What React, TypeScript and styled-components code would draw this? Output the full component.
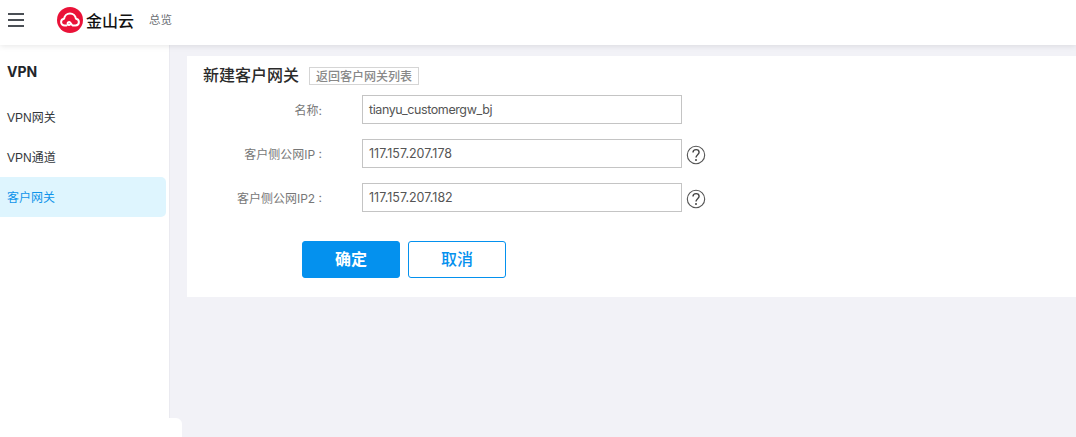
import styled, { createGlobalStyle } from "styled-components";

const GlobalStyle = createGlobalStyle`
  html, body {
    margin: 0;
    padding: 0;
    height: 100%;
    overflow: hidden;
    background: #f2f2f7;
    font-family: "Liberation Sans", "Noto Sans CJK SC", sans-serif;
  }
`;
const Page = styled.div`
  position: relative;
  height: 437px;
  overflow: hidden;
`;
const Header = styled.header`
  position: relative;
  z-index: 2;
  display: flex;
  align-items: center;
  box-sizing: border-box;
  height: 45px;
  padding-bottom: 5px;
  background: #fff;
  box-shadow: 0 1px 6px rgba(0, 0, 0, 0.1);
`;
const MenuButton = styled.div`
  display: flex;
  flex-direction: column;
  gap: 4px;
  width: 16px;
  margin: 0 33px 0 8px;
  span {
    display: block;
    height: 2px;
    background: #4a4f55;
  }
`;
const Logo = styled.div`
  display: flex;
  align-items: center;
  gap: 3px;
  margin-right: 16px;
`;
const LogoText = styled.span`
  font-family: "Noto Sans CJK SC", sans-serif;
  font-size: 16px;
  font-weight: 500;
  color: #111;
  line-height: 20px;
`;
const HeaderLink = styled.span`
  font-family: "Noto Sans CJK SC", sans-serif;
  font-size: 11.5px;
  color: #6b6f75;
  margin: 0 0 2px -1px;
`;
const Body = styled.div`
  display: flex;
  height: 392px;
`;
const Sidebar = styled.aside`
  width: 170px;
  flex: none;
  box-sizing: border-box;
  background: #fff;
  border-right: 1px solid #eaeaf0;
  padding-top: 18px;
`;
const SideTitle = styled.div`
  font-family: Inter, sans-serif;
  font-size: 14px;
  font-weight: 700;
  line-height: 18px;
  color: #22252a;
  padding-left: 7px;
  margin-bottom: 16px;
`;
const SideItem = styled.div<{ $active?: boolean }>`
  display: flex;
  align-items: center;
  height: 40px;
  width: 166px;
  box-sizing: border-box;
  padding: 0 0 2px 7px;
  font-size: 12px;
  color: ${(p) => (p.$active ? "#0f94ea" : "#33373c")};
  background: ${(p) => (p.$active ? "#def5fe" : "transparent")};
  border-radius: ${(p) => (p.$active ? "0 5px 5px 0" : "0")};
`;
const CornerFlap = styled.div`
  position: absolute;
  left: 0;
  bottom: 0;
  width: 182px;
  height: 19px;
  background: #fff;
  border-top-right-radius: 6px;
`;
const Main = styled.main`
  flex: 1;
  padding: 11px 0 0 17px;
`;
const Card = styled.section`
  height: 241px;
  box-sizing: border-box;
  background: #fff;
  padding: 8px 0 0 16px;
`;
const TitleRow = styled.div`
  display: flex;
  align-items: center;
  gap: 10px;
  height: 23px;
  margin-bottom: 8px;
`;
const Title = styled.h2`
  margin: 0 0 4px;
  font-family: "Noto Sans CJK SC", sans-serif;
  font-size: 16px;
  line-height: 20px;
  font-weight: 500;
  color: #2b2b2b;
`;
const BackLink = styled.a`
  box-sizing: border-box;
  display: flex;
  align-items: center;
  justify-content: center;
  width: 110px;
  height: 18px;
  border: 1px solid #d5d5d5;
  font-family: "Noto Sans CJK SC", sans-serif;
  font-size: 12px;
  font-weight: 500;
  color: #888;
`;
const Form = styled.div`
  display: flex;
  flex-direction: column;
  gap: 15px;
`;
const Row = styled.div`
  display: flex;
  align-items: center;
  height: 29px;
`;
const Label = styled.label`
  width: 119px;
  margin-right: 40px;
  text-align: right;
  font-family: Inter, "Noto Sans CJK SC", sans-serif;
  font-size: 12px;
  color: #777;
  white-space: nowrap;
`;
const Input = styled.div<{ $tight?: boolean }>`
  box-sizing: border-box;
  width: 320px;
  height: 29px;
  border: 1px solid #c4c4c4;
  padding-left: 6px;
  font-family: Inter, sans-serif;
  font-size: 12.5px;
  letter-spacing: ${(p) => (p.$tight ? "-0.4px" : "0")};
  line-height: 27px;
  color: #555;
`;
const Help = styled.svg`
  width: 20px;
  height: 20px;
  margin: 3px 0 0 4px;
`;
const Actions = styled.div`
  display: flex;
  gap: 8px;
  margin: 29px 0 0 99px;
`;
const Button = styled.button<{ $primary?: boolean }>`
  width: 98px;
  height: 37px;
  box-sizing: border-box;
  border-radius: 3px;
  border: 1px solid #0491ee;
  background: ${(p) => (p.$primary ? "#0491ee" : "#fff")};
  color: ${(p) => (p.$primary ? "#fff" : "#0491ee")};
  font-family: "Noto Sans CJK SC", sans-serif;
  font-size: 16px;
  font-weight: ${(p) => (p.$primary ? 700 : 500)};
  padding: 0 0 4px;
`;

const HelpIcon = () => (
  <Help viewBox="0 0 20 20">
    <circle cx="10" cy="10" r="8.7" fill="none" stroke="#555" strokeWidth="1.1" />
    <path d="M7 7.6c0-1.900 1.400-3 3.100-3s3 1.100 3 2.700c0 2.400-3.100 2.400-3.100 5.200" fill="none" stroke="#444" strokeWidth="1.4" />
    <circle cx="10" cy="15" r="1" fill="#444" />
  </Help>
);

const fields = [
  { label: "名称:", value: "tianyu_customergw_bj", tight: true },
  { label: "客户侧公网IP :", value: "117.157.207.178", help: true },
  { label: "客户侧公网IP2 :", value: "117.157.207.182", help: true },
];

export default function App() {
  return (
    <Page>
      <GlobalStyle />
      <Header>
        <MenuButton>
          <span />
          <span />
          <span />
        </MenuButton>
        <Logo>
          <svg width="26" height="26" viewBox="0 0 26 26">
            <circle cx="13" cy="13" r="13" fill="#ea1238" />
            <path
              d="M9.500 18.500H7.600c-2 0-3.500-1.500-3.500-3.400 0-1.800 1.300-3.200 3-3.400C7.500 8.800 9.900 6.500 13 6.500s5.500 2.300 5.900 5.200c1.700.2 3 1.600 3 3.400 0 1.900-1.500 3.400-3.500 3.400H15.500l-2.300-2.900c-.9-1.100-2.600-.5-2.600.9 0 1.300 1.500 2 2.500 1.100"
              fill="none"
              stroke="#fff"
              strokeWidth="2"
              strokeLinecap="round"
              strokeLinejoin="round"
            />
          </svg>
          <LogoText>金山云</LogoText>
        </Logo>
        <HeaderLink>总览</HeaderLink>
      </Header>
      <Body>
        <Sidebar>
          <SideTitle>VPN</SideTitle>
          <SideItem>VPN网关</SideItem>
          <SideItem>VPN通道</SideItem>
          <SideItem $active>客户网关</SideItem>
        </Sidebar>
        <Main>
          <Card>
            <TitleRow>
              <Title>新建客户网关</Title>
              <BackLink>返回客户网关列表</BackLink>
            </TitleRow>
            <Form>
              {fields.map((f) => (
                <Row key={f.label}>
                  <Label>{f.label}</Label>
                  <Input $tight={f.tight}>{f.value}</Input>
                  {f.help && <HelpIcon />}
                </Row>
              ))}
            </Form>
            <Actions>
              <Button $primary>确定</Button>
              <Button>取消</Button>
            </Actions>
          </Card>
        </Main>
      </Body>
      <CornerFlap />
    </Page>
  );
}
